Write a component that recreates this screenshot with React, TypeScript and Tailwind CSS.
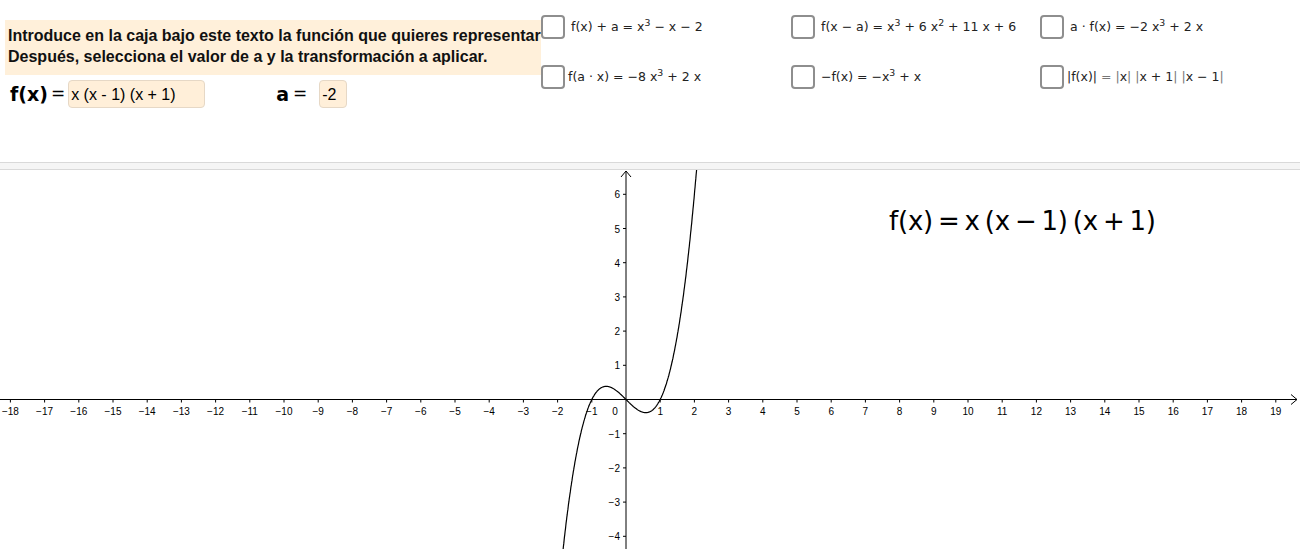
import React from 'react';

const OX = 626;
const OY = 229.5;
const S = 34.2;
const GRAPH_H = 379;

const math = { fontFamily: '"DejaVu Sans", sans-serif' };
const arial = { fontFamily: '"Liberation Sans", Arial, sans-serif' };

function Checkbox() {
  return <div className="h-[24px] w-[24px] shrink-0 rounded-[4px] border-2 border-[#8e8e8e] bg-white" />;
}

function Option({ children, gap = 'ml-[6px]' }: { children: React.ReactNode; gap?: string }) {
  return (
    <div className="flex h-[24px] items-center">
      <Checkbox />
      <span className={`${gap} whitespace-nowrap text-[12.5px] text-[#222]`} style={math}>
        {children}
      </span>
    </div>
  );
}

function Graph() {
  const xs: number[] = [];
  for (let i = -18; i <= 19; i++) if (i !== 0) xs.push(i);
  const ys = [-4, -3, -2, -1, 1, 2, 3, 4, 5, 6];

  const pts: string[] = [];
  for (let x = -2.05; x <= 2.2; x += 0.01) {
    const y = x * x * x - x;
    pts.push(`${(OX + x * S).toFixed(1)},${(OY - y * S).toFixed(1)}`);
  }

  const num = (n: number) => (n < 0 ? `\u2212${-n}` : `${n}`);

  return (
    <svg width="1300" height={GRAPH_H} className="block" style={arial}>
      {/* axes */}
      <line x1="0" y1={OY} x2="1297" y2={OY} stroke="#000" strokeWidth="1" />
      <path d={`M1291 ${OY - 5} L1297 ${OY} L1291 ${OY + 5}`} fill="none" stroke="#000" strokeWidth="1" />
      <line x1={OX} y1="1" x2={OX} y2={GRAPH_H} stroke="#000" strokeWidth="1" />
      <path d={`M${OX - 5} 7 L${OX} 1 L${OX + 5} 7`} fill="none" stroke="#000" strokeWidth="1" />

      {xs.map((n) => {
        const x = OX + n * S;
        return (
          <g key={`x${n}`}>
            <line x1={x} y1={OY} x2={x} y2={OY + 3} stroke="#000" />
            <text x={x} y={OY + 15} fontSize="10" textAnchor="middle" fill="#000">
              {num(n)}
            </text>
          </g>
        );
      })}
      <text x={OX - 11} y={OY + 15} fontSize="10" textAnchor="middle" fill="#000">
        0
      </text>

      {ys.map((n) => {
        const y = OY - n * S;
        return (
          <g key={`y${n}`}>
            <line x1={OX - 3} y1={y} x2={OX} y2={y} stroke="#000" />
            <text x={OX - 6} y={y + 4} fontSize="10" textAnchor="end" fill="#000">
              {num(n)}
            </text>
          </g>
        );
      })}

      <polyline points={pts.join(' ')} fill="none" stroke="#000" strokeWidth="1.2" />
    </svg>
  );
}

export default function App() {
  return (
    <div className="h-[549px] w-[1300px] overflow-hidden bg-white text-black">
      {/* top controls */}
      <div className="flex h-[162px] items-start">
        <div className="w-[541px] shrink-0 pl-[5px] pt-[20px]">
          <div
            className="h-[55px] w-[536px] bg-[#fff0da] pl-[3px] pt-[5px] text-[16px] font-bold leading-[21px] text-[#111]"
            style={arial}
          >
            <div className="whitespace-nowrap">Introduce en la caja bajo este texto la función que quieres representar</div>
            <div className="whitespace-nowrap">Después, selecciona el valor de a y la transformación a aplicar.</div>
          </div>

          <div className="mt-[5px] flex h-[28px] items-center">
            <span className="ml-[5px] flex items-center whitespace-nowrap" style={math}>
              <span className="text-[19px] font-bold">f(x)</span>
              <span className="ml-[3px] text-[17px]">=</span>
            </span>
            <div
              className="ml-[3px] flex h-[28px] w-[137px] items-center rounded-[4px] border border-[#e6d8c6] bg-[#ffefd9] pl-[2px] pt-[2px] text-[16px]"
              style={arial}
            >
              x (x - 1) (x + 1)
            </div>
            <span className="ml-[71px] flex items-center whitespace-nowrap" style={math}>
              <span className="text-[19px] font-bold">a</span>
              <span className="ml-[4px] text-[17px]">=</span>
            </span>
            <div
              className="ml-[12px] flex h-[28px] w-[28px] items-center rounded-[4px] border border-[#e6d8c6] bg-[#ffefd9] pl-[2px] pt-[2px] text-[16px]"
              style={arial}
            >
              -2
            </div>
          </div>
        </div>

        <div className="grid grid-cols-[250px_249px_auto] content-start gap-y-[26px] pt-[15px]">
          <Option>
            f(x) + a = x<sup>3</sup> − x − 2
          </Option>
          <Option>
            f(x − a) = x<sup>3</sup> + 6 x<sup>2</sup> + 11 x + 6
          </Option>
          <Option>
            a · f(x) = −2 x<sup>3</sup> + 2 x
          </Option>
          <Option gap="ml-[3px]">
            f(a · x) = −8 x<sup>3</sup> + 2 x
          </Option>
          <Option>
            −f(x) = −x<sup>3</sup> + x
          </Option>
          <Option gap="ml-[3px]">
            <span className="text-[#222]">|f(x)|</span>
            <span className="text-[#777]"> = |</span>x<span className="text-[#777]">| |</span>x + 1
            <span className="text-[#777]">| |</span>x − 1<span className="text-[#777]">|</span>
          </Option>
        </div>
      </div>

      {/* separator band */}
      <div className="h-[8px] border-y border-[#d9d9d9] bg-[#f5f5f5]" />

      {/* graphics view */}
      <div className="relative">
        <Graph />
        <div
          className="absolute left-[889px] top-[34px] whitespace-nowrap text-[26px] leading-[34px] tracking-[-0.2px]"
          style={math}
        >
          f(x)&#8201;=&#8201;x&#8201;(x&#8201;−&#8201;1)&#8201;(x&#8201;+&#8201;1)
        </div>
      </div>
    </div>
  );
}
